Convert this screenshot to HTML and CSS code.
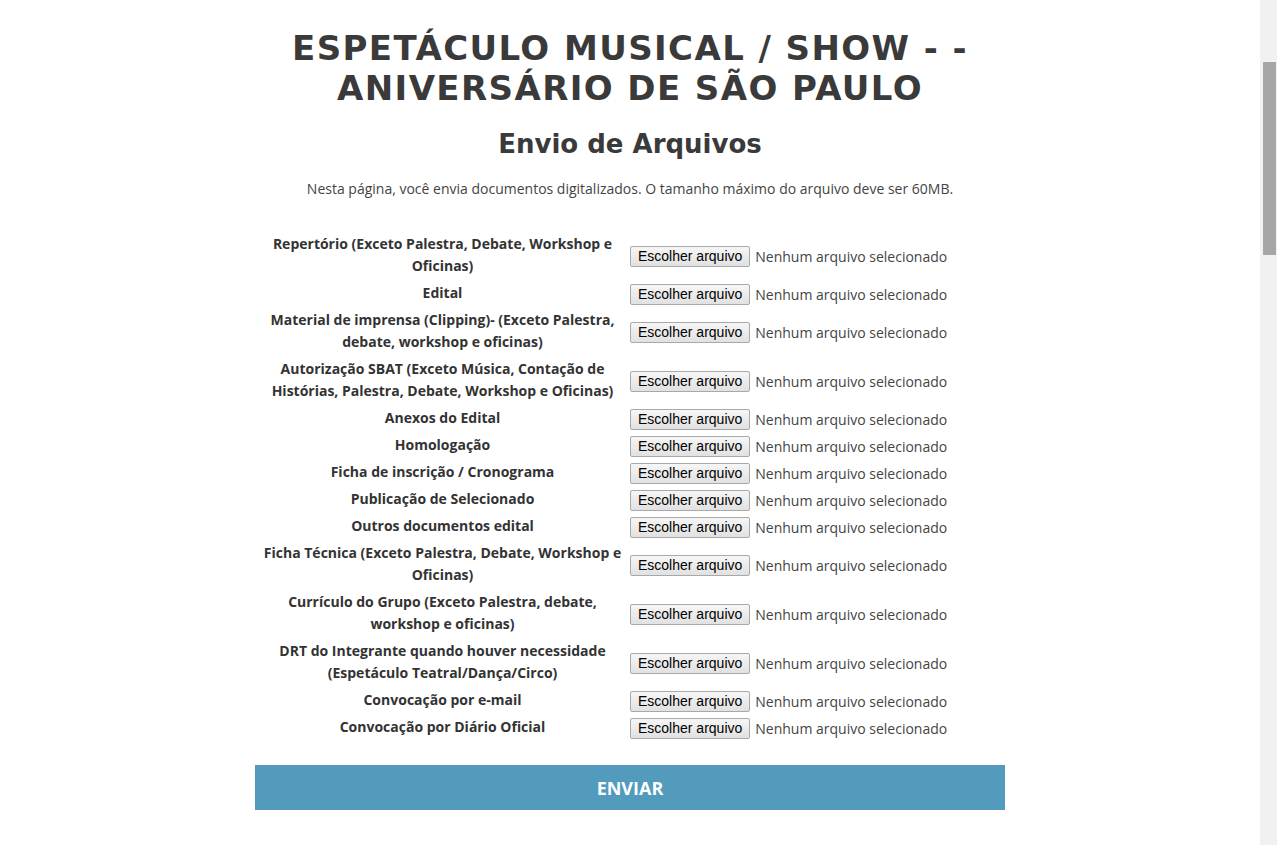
FILE: index.html
```html
<!DOCTYPE html>
<html lang="pt-BR">
<head>
<meta charset="utf-8">
<title>Envio de Arquivos</title>
<link rel="stylesheet" href="styles.css">
</head>
<body>
<main class="page">
  <h1 class="title">ESPETÁCULO MUSICAL / SHOW - - ANIVERSÁRIO DE SÃO PAULO</h1>
  <h2 class="subtitle">Envio de Arquivos</h2>
  <p class="intro">Nesta página, você envia documentos digitalizados. O tamanho máximo do arquivo deve ser 60MB.</p>
  <form class="upload-form">
    <div class="rows">
      <div class="row"><div class="label">Repertório (Exceto Palestra, Debate, Workshop e Oficinas)</div><label class="file"><input type="file" class="file-input"><span class="file-btn">Escolher arquivo</span><span class="file-name">Nenhum arquivo selecionado</span></label></div>
      <div class="row"><div class="label">Edital</div><label class="file"><input type="file" class="file-input"><span class="file-btn">Escolher arquivo</span><span class="file-name">Nenhum arquivo selecionado</span></label></div>
      <div class="row"><div class="label">Material de imprensa (Clipping)- (Exceto Palestra, debate, workshop e oficinas)</div><label class="file"><input type="file" class="file-input"><span class="file-btn">Escolher arquivo</span><span class="file-name">Nenhum arquivo selecionado</span></label></div>
      <div class="row"><div class="label">Autorização SBAT (Exceto Música, Contação de Histórias, Palestra, Debate, Workshop e Oficinas)</div><label class="file"><input type="file" class="file-input"><span class="file-btn">Escolher arquivo</span><span class="file-name">Nenhum arquivo selecionado</span></label></div>
      <div class="row"><div class="label">Anexos do Edital</div><label class="file"><input type="file" class="file-input"><span class="file-btn">Escolher arquivo</span><span class="file-name">Nenhum arquivo selecionado</span></label></div>
      <div class="row"><div class="label">Homologação</div><label class="file"><input type="file" class="file-input"><span class="file-btn">Escolher arquivo</span><span class="file-name">Nenhum arquivo selecionado</span></label></div>
      <div class="row"><div class="label">Ficha de inscrição / Cronograma</div><label class="file"><input type="file" class="file-input"><span class="file-btn">Escolher arquivo</span><span class="file-name">Nenhum arquivo selecionado</span></label></div>
      <div class="row"><div class="label">Publicação de Selecionado</div><label class="file"><input type="file" class="file-input"><span class="file-btn">Escolher arquivo</span><span class="file-name">Nenhum arquivo selecionado</span></label></div>
      <div class="row"><div class="label">Outros documentos edital</div><label class="file"><input type="file" class="file-input"><span class="file-btn">Escolher arquivo</span><span class="file-name">Nenhum arquivo selecionado</span></label></div>
      <div class="row"><div class="label">Ficha Técnica (Exceto Palestra, Debate, Workshop e Oficinas)</div><label class="file"><input type="file" class="file-input"><span class="file-btn">Escolher arquivo</span><span class="file-name">Nenhum arquivo selecionado</span></label></div>
      <div class="row"><div class="label">Currículo do Grupo (Exceto Palestra, debate, workshop e oficinas)</div><label class="file"><input type="file" class="file-input"><span class="file-btn">Escolher arquivo</span><span class="file-name">Nenhum arquivo selecionado</span></label></div>
      <div class="row"><div class="label">DRT do Integrante quando houver necessidade (Espetáculo Teatral/Dança/Circo)</div><label class="file"><input type="file" class="file-input"><span class="file-btn">Escolher arquivo</span><span class="file-name">Nenhum arquivo selecionado</span></label></div>
      <div class="row"><div class="label">Convocação por e-mail</div><label class="file"><input type="file" class="file-input"><span class="file-btn">Escolher arquivo</span><span class="file-name">Nenhum arquivo selecionado</span></label></div>
      <div class="row"><div class="label">Convocação por Diário Oficial</div><label class="file"><input type="file" class="file-input"><span class="file-btn">Escolher arquivo</span><span class="file-name">Nenhum arquivo selecionado</span></label></div>
    </div>
    <button type="button" class="submit">ENVIAR</button>
  </form>
</main>
<div class="scrollbar" aria-hidden="true"><div class="scrollbar-thumb"></div></div>
</body>
</html>
```
FILE: styles.css
```css
html, body {
  margin: 0;
  padding: 0;
  background: #ffffff;
}

body {
  padding-right: 17px;
  font-family: "Open Sans", "Liberation Sans", sans-serif;
  color: #333333;
}

.page {
  width: 750px;
  margin: 0 auto;
}

.title {
  margin: 28px 0 0;
  font-family: "DejaVu Sans", "Liberation Sans", sans-serif;
  font-weight: 700;
  font-size: 34px;
  line-height: 40px;
  letter-spacing: 1.4px;
  text-align: center;
  color: #3a3a3a;
}

.subtitle {
  margin: 18px 0 0;
  font-family: "DejaVu Sans", "Liberation Sans", sans-serif;
  font-weight: 700;
  font-size: 26px;
  line-height: 36px;
  text-align: center;
  color: #3a3a3a;
}

.intro {
  margin: 16px 0 0;
  font-size: 14px;
  line-height: 22px;
  text-align: center;
  color: #444444;
}

.upload-form {
  margin-top: 33px;
}

.rows {
  display: flex;
  flex-direction: column;
  gap: 5px;
}

.row {
  display: flex;
  align-items: center;
}

.label {
  width: 375px;
  box-sizing: border-box;
  padding: 0 5px;
  font-size: 14px;
  font-weight: 700;
  line-height: 22px;
  text-align: center;
  color: #333333;
}

.file {
  display: flex;
  align-items: center;
  padding-top: 2px;
  margin-bottom: -1px;
  cursor: pointer;
}

.file-input {
  display: none;
}

.file-btn {
  box-sizing: border-box;
  height: 21px;
  padding: 1px 7px;
  border: 1px solid #a9a9a9;
  border-radius: 2px;
  background: linear-gradient(#f6f6f6, #e1e1e1);
  font-family: "Liberation Sans", Arial, sans-serif;
  font-size: 14px;
  line-height: 17px;
  color: #000000;
  white-space: nowrap;
}

.file-name {
  margin-left: 5px;
  font-size: 14px;
  line-height: 21px;
  color: #444444;
  white-space: nowrap;
}

.submit {
  display: block;
  width: 100%;
  height: 45px;
  margin-top: 27px;
  border: 0;
  background: #529bbd;
  color: #ffffff;
  font-family: "Open Sans", "Liberation Sans", sans-serif;
  font-weight: 700;
  font-size: 18px;
  cursor: pointer;
}

.scrollbar {
  position: fixed;
  top: 0;
  right: 0;
  bottom: 0;
  width: 17px;
  background: #f1f1f1;
}

.scrollbar-thumb {
  position: absolute;
  top: 62px;
  left: 3px;
  width: 13px;
  height: 193px;
  background: #a6a6a6;
}
```
